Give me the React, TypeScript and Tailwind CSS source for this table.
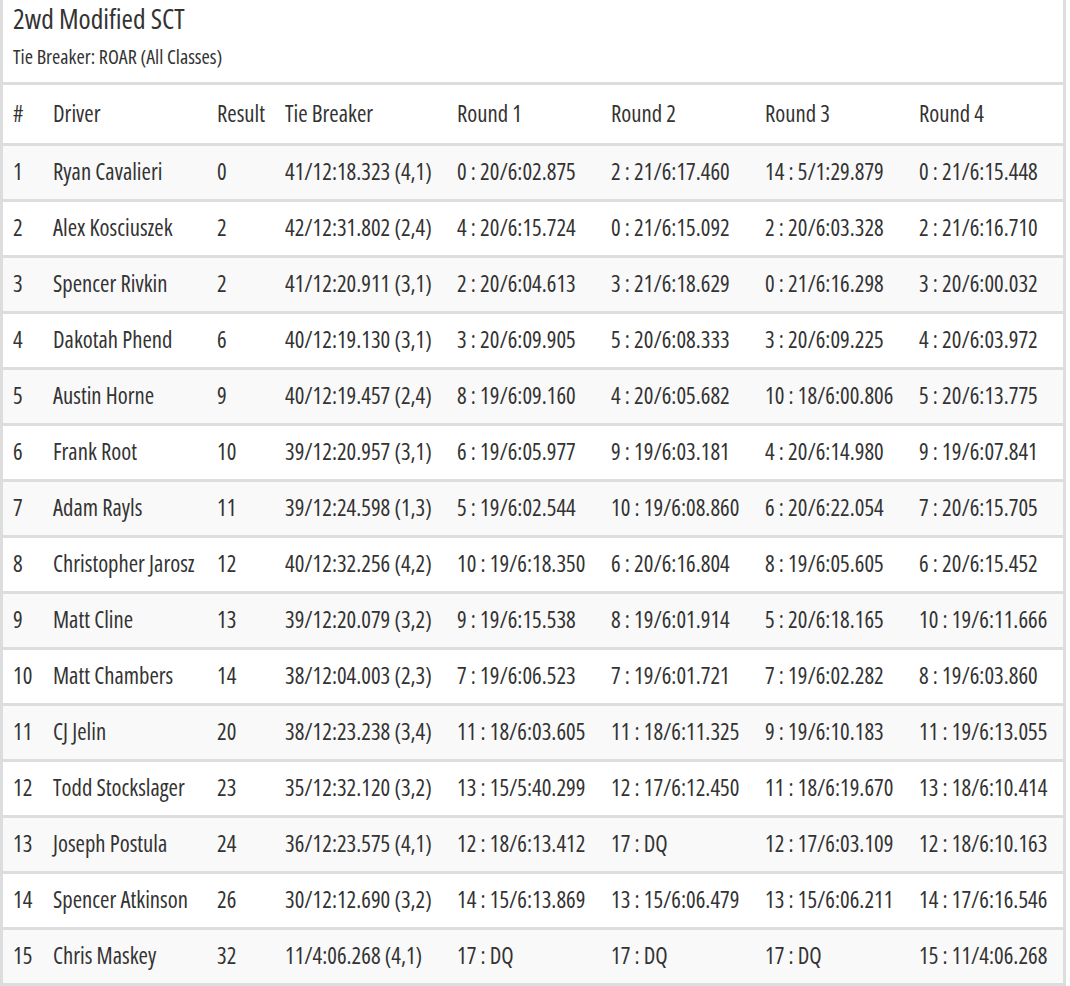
const rows: [string, string, string, string, string, string, string, string][] = [
  ["1", "Ryan Cavalieri", "0", "41/12:18.323 (4,1)", "0 : 20/6:02.875", "2 : 21/6:17.460", "14 : 5/1:29.879", "0 : 21/6:15.448"],
  ["2", "Alex Kosciuszek", "2", "42/12:31.802 (2,4)", "4 : 20/6:15.724", "0 : 21/6:15.092", "2 : 20/6:03.328", "2 : 21/6:16.710"],
  ["3", "Spencer Rivkin", "2", "41/12:20.911 (3,1)", "2 : 20/6:04.613", "3 : 21/6:18.629", "0 : 21/6:16.298", "3 : 20/6:00.032"],
  ["4", "Dakotah Phend", "6", "40/12:19.130 (3,1)", "3 : 20/6:09.905", "5 : 20/6:08.333", "3 : 20/6:09.225", "4 : 20/6:03.972"],
  ["5", "Austin Horne", "9", "40/12:19.457 (2,4)", "8 : 19/6:09.160", "4 : 20/6:05.682", "10 : 18/6:00.806", "5 : 20/6:13.775"],
  ["6", "Frank Root", "10", "39/12:20.957 (3,1)", "6 : 19/6:05.977", "9 : 19/6:03.181", "4 : 20/6:14.980", "9 : 19/6:07.841"],
  ["7", "Adam Rayls", "11", "39/12:24.598 (1,3)", "5 : 19/6:02.544", "10 : 19/6:08.860", "6 : 20/6:22.054", "7 : 20/6:15.705"],
  ["8", "Christopher Jarosz", "12", "40/12:32.256 (4,2)", "10 : 19/6:18.350", "6 : 20/6:16.804", "8 : 19/6:05.605", "6 : 20/6:15.452"],
  ["9", "Matt Cline", "13", "39/12:20.079 (3,2)", "9 : 19/6:15.538", "8 : 19/6:01.914", "5 : 20/6:18.165", "10 : 19/6:11.666"],
  ["10", "Matt Chambers", "14", "38/12:04.003 (2,3)", "7 : 19/6:06.523", "7 : 19/6:01.721", "7 : 19/6:02.282", "8 : 19/6:03.860"],
  ["11", "CJ Jelin", "20", "38/12:23.238 (3,4)", "11 : 18/6:03.605", "11 : 18/6:11.325", "9 : 19/6:10.183", "11 : 19/6:13.055"],
  ["12", "Todd Stockslager", "23", "35/12:32.120 (3,2)", "13 : 15/5:40.299", "12 : 17/6:12.450", "11 : 18/6:19.670", "13 : 18/6:10.414"],
  ["13", "Joseph Postula", "24", "36/12:23.575 (4,1)", "12 : 18/6:13.412", "17 : DQ", "12 : 17/6:03.109", "12 : 18/6:10.163"],
  ["14", "Spencer Atkinson", "26", "30/12:12.690 (3,2)", "14 : 15/6:13.869", "13 : 15/6:06.479", "13 : 15/6:06.211", "14 : 17/6:16.546"],
  ["15", "Chris Maskey", "32", "11/4:06.268 (4,1)", "17 : DQ", "17 : DQ", "17 : DQ", "15 : 11/4:06.268"],
];

const headers = ["#", "Driver", "Result", "Tie Breaker", "Round 1", "Round 2", "Round 3", "Round 4"];
const widths = ["w-[40px]", "w-[164px]", "w-[68px]", "w-[172px]", "w-[154px]", "w-[154px]", "w-[154px]", "w-auto"];

export default function App() {
  return (
    <div className="w-[1070px] bg-white font-['Open_Sans',sans-serif] [font-stretch:75%] text-[#333]">
      <div className="mr-[4px] border-x-[3px] border-[#ddd]">
        {/* heading */}
        <div className="h-[82px] px-[10px]">
          <h1 className="pt-[1px] text-[27.6px] leading-[34px]">2wd Modified SCT</h1>
          <p className="mt-[10px] text-[20px] leading-[24px]">Tie Breaker: ROAR (All Classes)</p>
        </div>

        <table className="w-full table-fixed border-collapse text-[22.7px]">
          <thead>
            <tr className="border-y-[3px] border-[#ddd]">
              {headers.map((h, i) => (
                <th key={h} className={`${widths[i]} h-[61px] px-[10px] text-left font-normal`}>
                  {h}
                </th>
              ))}
            </tr>
          </thead>
          <tbody>
            {rows.map((r, ri) => (
              <tr key={r[0]} className={`border-b-[3px] border-[#ddd] ${ri % 2 === 0 ? "bg-[#f9f9f9]" : "bg-white"}`}>
                {r.map((c, ci) => (
                  <td key={ci} className="h-[56px] whitespace-nowrap px-[10px] text-left">
                    {c}
                  </td>
                ))}
              </tr>
            ))}
          </tbody>
        </table>
      </div>
    </div>
  );
}
